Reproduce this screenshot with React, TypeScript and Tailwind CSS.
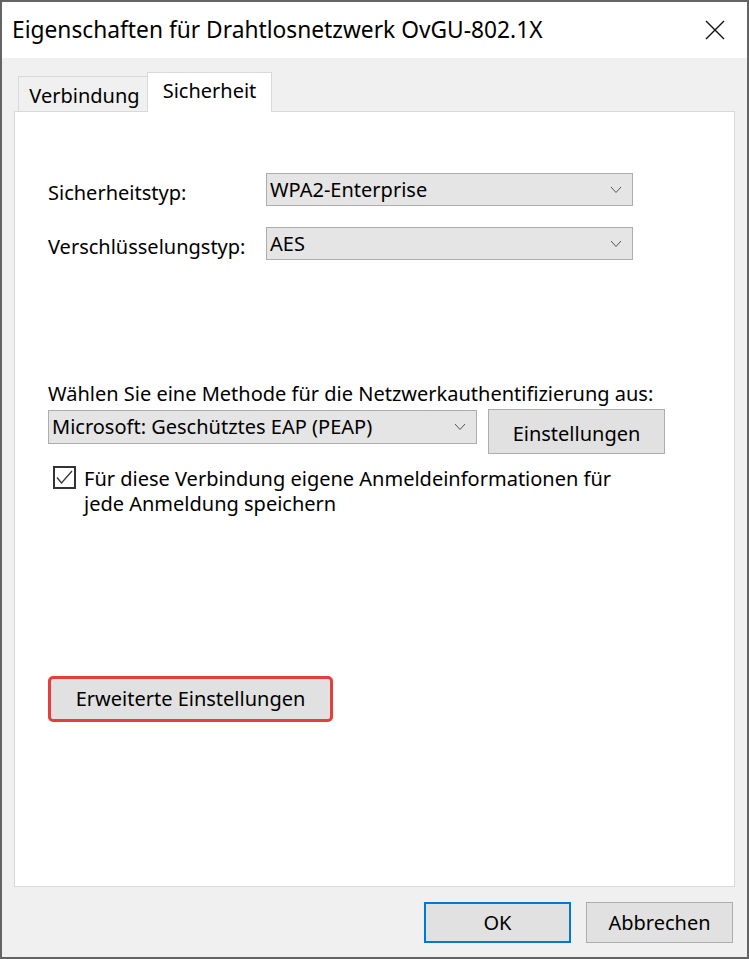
const font = { fontFamily: '"Segoe UI", "Noto Sans", sans-serif' }

function Chevron() {
  return (
    <svg width="12" height="8" viewBox="0 0 12 8" className="shrink-0">
      <polyline points="1,1 6,6.5 11,1" fill="none" stroke="#555" strokeWidth="1" />
    </svg>
  )
}

function Select({ value, className }: { value: string; className: string }) {
  return (
    <div className={`flex items-center justify-between border border-[#adadad] bg-[#e5e5e5] pl-[3px] pr-[10px] text-[20px] text-black ${className}`}>
      <span className="leading-none">{value}</span>
      <Chevron />
    </div>
  )
}

function Button({ label, className }: { label: string; className: string }) {
  return (
    <div className={`flex items-center justify-center border border-[#adadad] bg-[#e1e1e1] text-[20px] leading-none text-black ${className}`}>
      {label}
    </div>
  )
}

export default function App() {
  return (
    <div style={font} className="flex h-[959px] w-[749px] flex-col border-2 border-[#646464] bg-[#f0f0f0] text-black">
      {/* title bar */}
      <div className="flex h-[56px] shrink-0 items-center justify-between bg-white pl-[10px] pr-[22px]">
        <span className="text-[22.75px] leading-none">Eigenschaften für Drahtlosnetzwerk OvGU-802.1X</span>
        <svg width="20" height="20" viewBox="0 0 20 20">
          <path d="M1 1 L19 19 M19 1 L1 19" stroke="#111" strokeWidth="1.4" fill="none" />
        </svg>
      </div>

      {/* tabs */}
      <div className="relative z-10 mt-[13px] flex h-[40px] items-end pl-[16px]">
        <div className="flex h-[35px] w-[130px] items-center justify-center border border-b-0 border-[#d9d9d9] bg-[#f0f0f0] pl-[3px] pt-[4px] text-[20px] leading-none">
          Verbindung
        </div>
        <div className="-mb-px -ml-px flex h-[40px] w-[125px] items-center justify-center border border-b-0 border-[#d9d9d9] bg-white pb-[3px] text-[20px] leading-none">
          Sicherheit
        </div>
      </div>

      {/* panel */}
      <div className="mx-[12px] flex h-[776px] flex-col border border-[#d9d9d9] bg-white pl-[33px] text-[20px]">
        <div className="mt-[61px] flex h-[33px] items-center">
          <span className="w-[218px] pt-[7px] leading-none">Sicherheitstyp:</span>
          <Select value="WPA2-Enterprise" className="h-[33px] w-[367px]" />
        </div>
        <div className="mt-[21px] flex h-[33px] items-center">
          <span className="w-[218px] pt-[7px] leading-none">Verschlüsselungstyp:</span>
          <Select value="AES" className="h-[33px] w-[367px]" />
        </div>

        <div className="mt-[122px] h-[24px] leading-[24px]">Wählen Sie eine Methode für die Netzwerkauthentifizierung aus:</div>
        <div className="mt-[3px] flex items-start">
          <Select value="Microsoft: Geschütztes EAP (PEAP)" className="mt-[1px] h-[34px] w-[429px]" />
          <Button label="Einstellungen" className="ml-[11px] h-[45px] w-[177px] pt-[4px]" />
        </div>

        <div className="mt-[12px] flex items-start pl-[5px]">
          <svg width="23" height="23" viewBox="0 0 23 23" className="shrink-0">
            <rect x="1" y="1" width="21" height="21" fill="white" stroke="#333" strokeWidth="2" />
            <polyline points="4,11.5 8.5,17 19,5" fill="none" stroke="#333" strokeWidth="1.3" />
          </svg>
          <div className="ml-[8px] leading-[25px]">
            Für diese Verbindung eigene Anmeldeinformationen für
            <br />
            jede Anmeldung speichern
          </div>
        </div>

        <div className="mt-[160px] flex h-[46px] w-[285px] items-center justify-center rounded-[5px] border-[3px] border-[#e53e3e] bg-[#e1e1e1] leading-none">
          Erweiterte Einstellungen
        </div>
      </div>

      {/* footer */}
      <div className="mt-[15px] flex justify-end gap-[15px] pr-[14px]">
        <div className="flex h-[41px] w-[147px] items-center justify-center border-2 border-[#0078d7] bg-[#e1e1e1] text-[20px] leading-none">OK</div>
        <Button label="Abbrechen" className="h-[41px] w-[147px]" />
      </div>
    </div>
  )
}
